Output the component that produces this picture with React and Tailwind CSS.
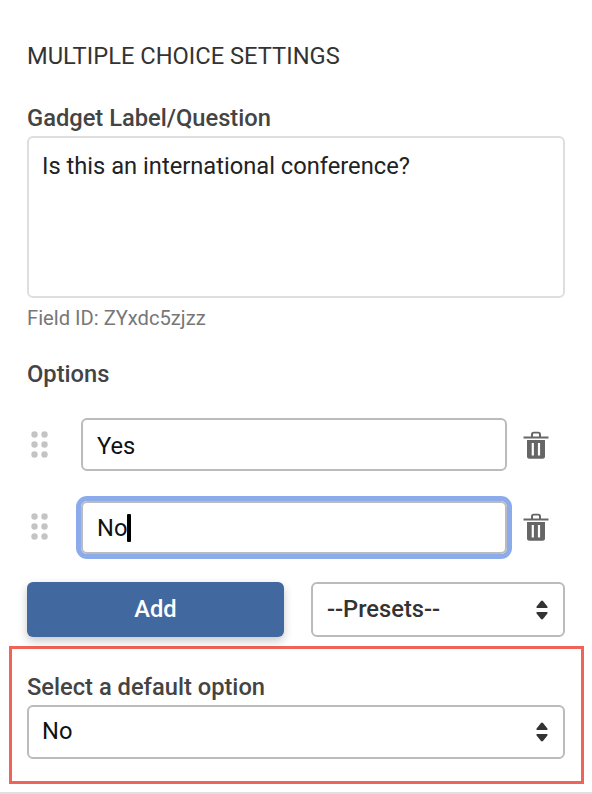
const font = { fontFamily: 'Roboto, sans-serif' };

function Grip() {
  return (
    <svg width="18" height="27" viewBox="0 0 18 27" className="block shrink-0">
      {[3.5, 13.5, 23.5].map((y) =>
        [3.5, 13.5].map((x) => <circle key={`${x}-${y}`} cx={x} cy={y} r="3.2" fill="#c4c4c4" />)
      )}
    </svg>
  );
}

function Trash() {
  return (
    <svg width="26" height="28" viewBox="0 0 26 28" className="block shrink-0">
      <path d="M0.5 5.5H25.5V7.5H0.5Z M8 5.5V3.5C8 1.8 9 0.8 10.5 0.8H15.5C17 0.8 18 1.8 18 3.5V5.5H16V3.7C16 3 15.6 2.6 15 2.6H11C10.4 2.6 10 3 10 3.7V5.5Z" fill="#666" />
      <path fillRule="evenodd" d="M4 9H22V25.5C22 26.9 21.1 27.7 19.8 27.7H6.2C4.9 27.7 4 26.9 4 25.5ZM8.7 12V24.5H10.9V12ZM14.9 12V24.5H17.1V12Z" fill="#666" />
    </svg>
  );
}

function Updown() {
  return (
    <svg width="12" height="20" viewBox="0 0 12 20" className="block shrink-0">
      <path d="M6 0.5C6.4 0.5 6.7 0.7 7 1L11.4 6.6C11.9 7.2 11.6 8 10.8 8H1.2C0.4 8 0.1 7.2 0.6 6.6L5 1C5.3 0.7 5.6 0.5 6 0.5Z M1.2 12H10.8C11.6 12 11.9 12.8 11.4 13.4L7 19C6.5 19.6 5.5 19.6 5 19L0.6 13.4C0.1 12.8 0.4 12 1.2 12Z" fill="#333" />
    </svg>
  );
}

export default function App() {
  return (
    <div style={font} className="w-[592px] h-[794px] overflow-hidden bg-white border-b-2 border-[#e0e0e0] pl-[27px] pr-[27px] pt-[43px]">
      <div className="text-[23.7px] leading-[26px] text-[#333]">MULTIPLE CHOICE SETTINGS</div>

      <div className="mt-[36px] text-[23.7px] leading-[26px] font-medium text-[#444]">Gadget Label/Question</div>
      <div className="mt-[5px] h-[162px] rounded-[6px] border-2 border-[#dedede] pl-[13px] pt-[13px] text-[23.7px] leading-[30px] text-[#222]">
        Is this an international conference?
      </div>
      <div className="mt-[9px] text-[20.2px] leading-[22px] text-[#777]">Field ID: ZYxdc5zjzz</div>

      <div className="mt-[32px] text-[23.7px] leading-[26px] font-medium text-[#444]">Options</div>

      <div className="mt-[31px] flex items-center">
        <div className="w-[54px] pl-[4px]"><Grip /></div>
        <div className="w-[426px] h-[53px] rounded-[6px] border-2 border-[#bbb] pl-[14px] pt-[4px] flex items-center text-[23.7px] text-[#111]">Yes</div>
        <div className="ml-[16px]"><Trash /></div>
      </div>

      <div className="mt-[30px] flex items-center">
        <div className="w-[54px] pl-[4px] pb-[2px]"><Grip /></div>
        <div className="w-[426px] h-[53px] rounded-[6px] border-2 border-[#bbb] pl-[14px] flex items-center text-[23.7px] text-[#111] shadow-[0_0_0_5px_#8cabec]">
          <span className="pt-[2px]">No</span><span className="inline-block w-[4px] h-[28px] rounded-[1px] bg-black"></span>
        </div>
        <div className="ml-[16px] pb-[2px]"><Trash /></div>
      </div>

      <div className="mt-[28px] flex justify-between">
        <button className="w-[257px] h-[55px] rounded-[6px] bg-[#41699f] text-white text-[23.7px] font-medium shadow-[0_4px_10px_rgba(0,0,0,0.22)]">Add</button>
        <div className="w-[254px] h-[55px] rounded-[6px] border-2 border-[#bbb] pl-[14px] pr-[15px] flex items-center justify-between text-[23.7px] font-medium text-[#333]">
          <span>--Presets--</span><Updown />
        </div>
      </div>

      <div className="mt-[9px] ml-[-18px] mr-[-19px] h-[138px] border-[3px] border-[#ef6358] px-[15px] pt-[25px]">
        <div className="text-[23.7px] leading-[26px] font-medium text-[#444]">Select a default option</div>
        <div className="mt-[5px] mr-[1px] h-[54px] rounded-[6px] border-2 border-[#bbb] pl-[13px] pr-[15px] flex items-center justify-between text-[23.7px] text-[#111]">
          <span>No</span><Updown />
        </div>
      </div>
    </div>
  );
}
